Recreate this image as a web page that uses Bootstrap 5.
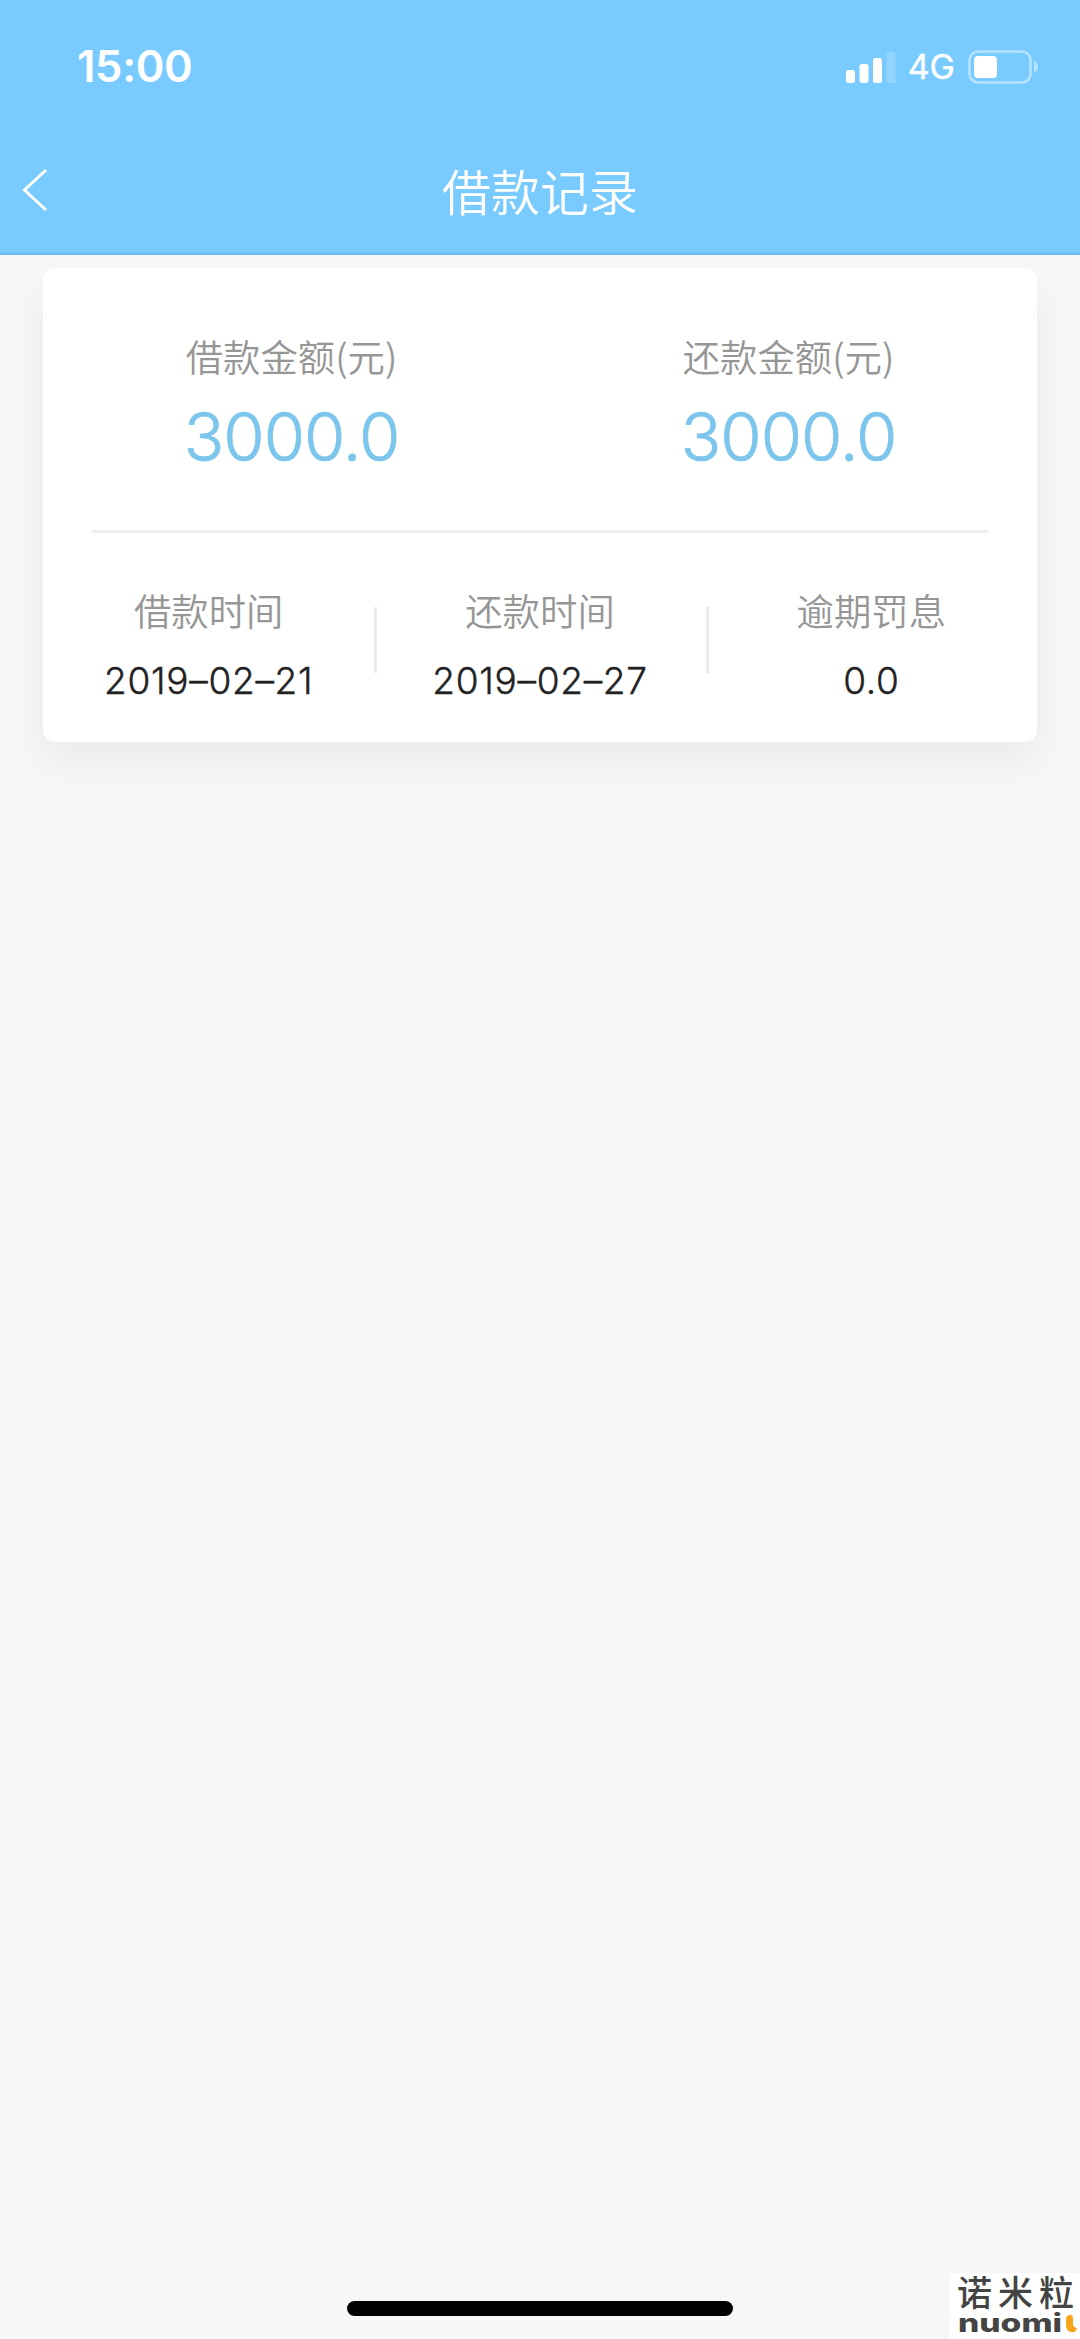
<!DOCTYPE html>
<html lang="zh-CN">
<head>
<meta charset="utf-8">
<meta name="viewport" content="width=device-width, initial-scale=1">
<title>借款记录</title>
<link href="https://cdn.jsdelivr.net/npm/bootstrap@5.3.0/dist/css/bootstrap.min.css" rel="stylesheet">
<style>
body{background:#f7f7f7;font-family:Inter,"Noto Sans CJK SC",sans-serif;height:2339px;overflow:hidden}
svg{display:block;overflow:visible}
.app-head{background:#79cbff;height:255px;border-bottom:2px solid #6bbcf2;color:#fff}
.status{height:134px;padding:0 41px 0 77px}
.clock{font-size:43.5px;font-weight:600;line-height:1;letter-spacing:-.3px}
.net{font-size:34px;font-weight:400;-webkit-text-stroke:.4px #fff;line-height:1;margin:0 13px 0 12px}
.title-bar{height:114px;padding:0 22px}
.title-bar h1{font-family:"Noto Sans CJK SC",sans-serif;font-size:49px;font-weight:350;line-height:60px;padding-bottom:3px}
.side{width:60px}
.loan{margin:13px 43px 0;height:474px;border:0;border-radius:12px;box-shadow:0 20px 44px rgba(0,0,0,.055)}
.cap{font-family:"Noto Sans CJK SC",sans-serif;font-size:37.4px;font-weight:350;color:#969696;line-height:50px}
.sum{font-size:67px;font-weight:300;-webkit-text-stroke:.7px #7cc5ec;color:#7cc5ec;line-height:66px;letter-spacing:-1px;padding-top:7px}
.amounts{padding-top:63px;height:262px}
.rule{height:3px;background:#eee;margin:0 49px}
.val{font-size:37px;font-weight:300;-webkit-text-stroke:.4px #222;color:#222;line-height:44px;letter-spacing:.7px}
.details{padding-top:52px}
.split::after{content:"";position:absolute;right:-3px;top:22px;width:3px;height:66px;background:#ebebeb}
.home-bar{width:386px;height:15px;border-radius:8px;background:#000;margin-bottom:23px}
.stamp{right:0;bottom:0;width:130px;height:66px;background:#fff;color:#444}
</style>
</head>
<body class="d-flex flex-column">
<header class="app-head">
  <div class="status d-flex align-items-center justify-content-between">
    <span class="clock">15:00</span>
    <div class="d-flex align-items-center">
      <svg width="50" height="32" viewBox="0 0 50 32" fill="#fff"><rect y="19" width="9" height="13" rx="2.5"/><rect x="13.5" y="13" width="9" height="19" rx="2.5"/><rect x="27" y="7" width="9" height="25" rx="2.5"/><rect x="40.500" y="1" width="9" height="31" rx="2.500" opacity=".2"/></svg>
      <span class="net">4G</span>
      <svg width="71" height="34" viewBox="0 0 71 34"><rect x="1.500" y="1.500" width="61" height="31" rx="8.500" fill="none" stroke="#fff" stroke-opacity=".45" stroke-width="2.600"/><rect x="6" y="6" width="23" height="22" rx="4" fill="#fff"/><path d="M66 11q4 2 4 6t-4 6z" fill="#fff" opacity=".45"/></svg>
    </div>
  </div>
  <div class="title-bar d-flex align-items-center justify-content-between">
    <a href="#" class="side" aria-label="返回"><svg width="26" height="44" viewBox="0 0 26 44" fill="none" stroke="#fff" stroke-width="3"><path d="M24 1 2.500 21 24 41"/></svg></a>
    <h1 class="m-0">借款记录</h1>
    <span class="side"></span>
  </div>
</header>
<main class="flex-grow-1">
  <section class="card loan">
    <div class="amounts row g-0 text-center">
      <div class="col-6"><div class="cap">借款金额(元)</div><div class="sum mt-3">3000.0</div></div>
      <div class="col-6"><div class="cap">还款金额(元)</div><div class="sum mt-3">3000.0</div></div>
    </div>
    <div class="rule"></div>
    <div class="details row g-0 text-center">
      <div class="col-4 position-relative split"><div class="cap">借款时间</div><div class="val mt-4">2019–02–21</div></div>
      <div class="col-4 position-relative split"><div class="cap">还款时间</div><div class="val mt-4">2019–02–27</div></div>
      <div class="col-4"><div class="cap">逾期罚息</div><div class="val mt-4">0.0</div></div>
    </div>
  </section>
</main>
<div class="home-bar mx-auto"></div>
<div class="stamp position-absolute">
  <svg width="130" height="66" viewBox="0 0 130 66" fill="#444"><text x="7" y="33" dx="0 6 6" font-family="Noto Sans CJK SC" font-weight="500" font-size="35">诺米粒</text><text x="8" y="59" font-family="Inter" font-weight="800" font-size="25" textLength="104" lengthAdjust="spacingAndGlyphs">nuomi</text><path d="M119 42q4-1 4 4v5q0 3 4 4-1 5-6 4-5-1-5-7v-6q0-3 3-4z" fill="#f9a61a"/></svg>
</div>
<script src="https://cdn.jsdelivr.net/npm/bootstrap@5.3.0/dist/js/bootstrap.bundle.min.js"></script>
</body>
</html>
